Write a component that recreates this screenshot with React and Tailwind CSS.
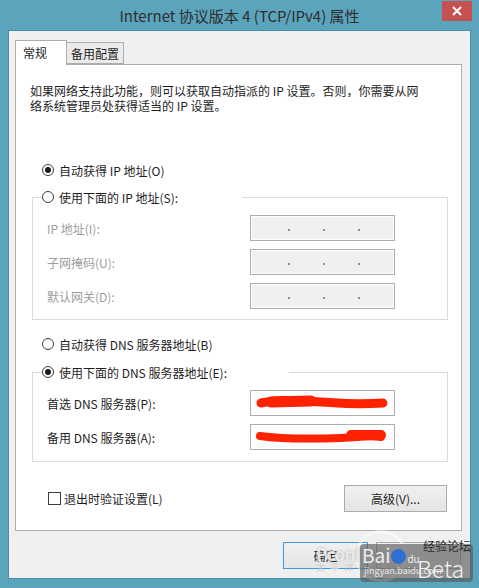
import React from "react";

const Radio = ({ checked }) => (
  <span className="w-[12px] h-[12px] rounded-full border border-[#3c3c3c] bg-white flex items-center justify-center shrink-0">
    {checked && <span className="w-[6px] h-[6px] rounded-full bg-[#1b1b1b]" />}
  </span>
);

const RadioRow = ({ checked, label }) => (
  <div className="flex items-center gap-[5px] h-[16px]">
    <Radio checked={checked} />
    <span>{label}</span>
  </div>
);

const IpBox = () => (
  <div className="w-[145px] h-[26px] border border-[#adadad] bg-[#f0f0f0] shadow-[inset_0_0_0_1px_#ffffff] flex items-center pl-[37px] gap-[33px] pt-[4px]">
    <span className="w-[2px] h-[2px] bg-[#8a8a96]" />
    <span className="w-[2px] h-[2px] bg-[#9a9488]" />
    <span className="w-[2px] h-[2px] bg-[#8a8a96]" />
  </div>
);

// red scribbles that hide the DNS addresses
const DnsBox = ({ variant }) => (
  <div className="w-[145px] h-[26px] border border-[#adadad] bg-white flex items-center">
    <svg width="143" height="24" viewBox="0 0 143 24">
      {variant === 1 ? (
        <>
          <path d="M10 12 C 30 8, 50 10, 70 11 S 100 14, 132 12" stroke="#ff2200" strokeWidth="9" strokeLinecap="round" fill="none" />
          <path d="M20 11 L 60 10" stroke="#ff2200" strokeWidth="11" strokeLinecap="round" fill="none" />
        </>
      ) : (
        <>
          <path d="M9 11 C 30 14, 60 14, 90 13 S 115 10, 130 12" stroke="#ff2200" strokeWidth="8" strokeLinecap="round" fill="none" />
          <path d="M100 10 L 130 10" stroke="#ff2200" strokeWidth="10" strokeLinecap="round" fill="none" />
        </>
      )}
    </svg>
  </div>
);

const Button = ({ children, className = "" }) => (
  <div className={`h-[27px] flex items-center justify-center border bg-gradient-to-b from-[#f0f0f0] to-[#e5e5e5] ${className}`}>
    {children}
  </div>
);

export default function App() {
  return (
    <div className="relative w-[479px] h-[588px] bg-[#5aa4bc] flex flex-col font-['Noto_Sans_CJK_SC',sans-serif] text-[12px] leading-[15px] text-[#1e1e1e] overflow-hidden">
      {/* title bar */}
      <div className="h-[30px] relative flex items-center justify-center">
        <span className="text-[15px] text-[#2e2e2e] pt-[1px]">Internet 协议版本 4 (TCP/IPv4) 属性</span>
        <div className="absolute right-[7px] top-[1px] w-[30px] h-[20px] bg-[#c75050] flex items-center justify-center">
          <svg width="10" height="10" viewBox="0 0 10 10">
            <path d="M1 1 L9 9 M9 1 L1 9" stroke="#fff" strokeWidth="2" />
          </svg>
        </div>
      </div>

      {/* client area */}
      <div className="mx-[8px] w-[463px] h-[549px] bg-[#f0f0f0] border border-[#4a8ea6] pl-[6px] pr-[8px] pt-[9px] flex flex-col">
        {/* tabs */}
        <div className="flex items-end h-[25px] -mb-[1px] relative z-10">
          <div className="w-[52px] h-[25px] bg-white border border-b-0 border-[#adadad] pl-[7px] pt-[4px]">常规</div>
          <div className="w-[58px] h-[22px] -ml-[1px] mb-[1px] bg-[#ebebeb] border border-[#adadad] pl-[4px] pt-[3px]">备用配置</div>
        </div>

        {/* panel */}
        <div className="w-[447px] h-[467px] bg-white border border-[#adadad] pl-[16px] pr-[13px] flex flex-col">
          <p className="-ml-[2px] mt-[18px]">
            如果网络支持此功能，则可以获取自动指派的 IP 设置。否则，你需要从网
            <br />
            络系统管理员处获得适当的 IP 设置。
          </p>

          <div className="ml-[10px] mt-[49px]">
            <RadioRow checked label="自动获得 IP 地址(O)" />
          </div>

          <fieldset className="mt-[11px] border border-[#dcdcdc]">
            <legend className="ml-[9px] w-[200px]">
              <RadioRow label="使用下面的 IP 地址(S):" />
            </legend>
            <div className="pl-[14px] pt-[10px] pb-[10px] flex flex-col gap-[8px] text-[#9d9d9d]">
              <div className="flex items-center">
                <span className="w-[203px]">IP 地址(I):</span>
                <IpBox />
              </div>
              <div className="flex items-center">
                <span className="w-[203px]">子网掩码(U):</span>
                <IpBox />
              </div>
              <div className="flex items-center">
                <span className="w-[203px]">默认网关(D):</span>
                <IpBox />
              </div>
            </div>
          </fieldset>

          <div className="ml-[10px] mt-[16px]">
            <RadioRow label="自动获得 DNS 服务器地址(B)" />
          </div>

          <fieldset className="mt-[12px] border border-[#dcdcdc]">
            <legend className="ml-[9px] w-[247px]">
              <RadioRow checked label="使用下面的 DNS 服务器地址(E):" />
            </legend>
            <div className="pl-[14px] pt-[10px] pb-[11px] flex flex-col gap-[8px]">
              <div className="flex items-center">
                <span className="w-[203px]">首选 DNS 服务器(P):</span>
                <DnsBox variant={1} />
              </div>
              <div className="flex items-center">
                <span className="w-[203px]">备用 DNS 服务器(A):</span>
                <DnsBox variant={2} />
              </div>
            </div>
          </fieldset>

          <div className="mt-[23px] flex items-center justify-between mr-[1px]">
            <div className="ml-[16px] flex items-center gap-[3px]">
              <span className="w-[13px] h-[13px] border border-[#3c3c3c] bg-white" />
              <span>退出时验证设置(L)</span>
            </div>
            <Button className="w-[103px] border-[#acacac]">高级(V)...</Button>
          </div>
        </div>

        {/* bottom buttons (cancel is hidden under the watermark) */}
        <div className="mt-[11px] flex justify-end gap-[8px] mr-[1px]">
          <Button className="w-[85px] border-[#3c9ae0]">确定</Button>
          <Button className="w-[85px] border-[#acacac]" />
        </div>
      </div>

      {/* watermark */}
      <div className="absolute left-[355px] top-[530px] w-[52px] h-[52px] rounded-full border-[3px] border-white/50 pointer-events-none" />
      <div className="absolute left-[316px] top-[545px] text-white/75 pointer-events-none">
        <div className="text-[17px] leading-[17px] font-bold tracking-tight [text-shadow:0_0_2px_#9a9a9a]">Pconline</div>
        <div className="text-[9px] leading-[11px] tracking-[5px] text-[#cfcfcf]">太平洋电脑网</div>
      </div>
      <div className="absolute left-[360px] top-[544px] w-[113px] h-[38px] rounded-[4px] bg-[#5a5a5a]/65 pointer-events-none" />
      <div className="absolute left-[362px] top-[545px] flex items-end pointer-events-none">
        <span className="text-[19px] leading-[19px] text-white/85">Bai</span>
        <span className="w-[15px] h-[15px] rounded-full bg-[#2f6fd0] mx-[1px]" />
        <span className="text-[10px] leading-[11px] text-white/85">du</span>
      </div>
      <div className="absolute left-[423px] top-[539px] text-[12px] leading-[14px] text-[#2a2a2a] pointer-events-none">经验论坛</div>
      <div className="absolute left-[364px] top-[566px] text-[9px] leading-[10px] text-white/80 pointer-events-none">jingyan.baidu.com</div>
      <div className="absolute left-[417px] top-[557px] text-[23px] leading-[23px] text-white/90 font-light pointer-events-none">Beta</div>
    </div>
  );
}
